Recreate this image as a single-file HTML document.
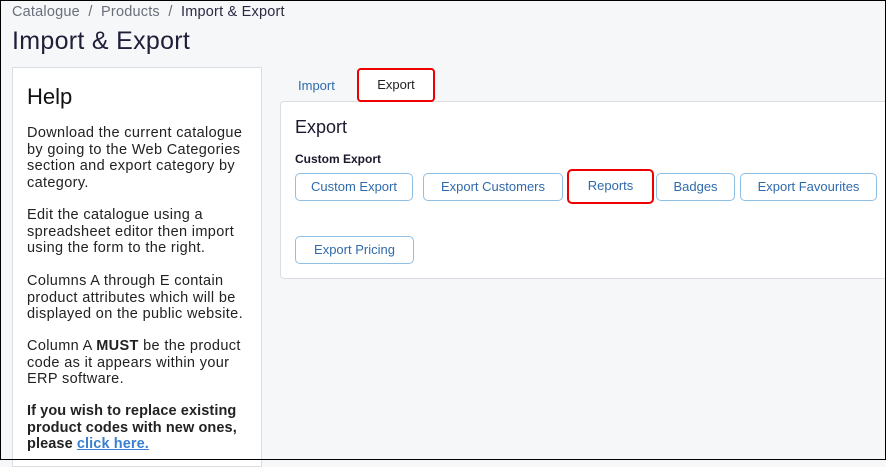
<!DOCTYPE html><html><head><style>
*{box-sizing:border-box;margin:0;padding:0}
body{width:886px;height:460px;overflow:hidden;background:#f6f7f9;font-family:"Liberation Sans",sans-serif;position:relative;color:#1f1f3a}
.frame{position:absolute;left:0;top:0;width:886px;height:460px;border:1px solid #000;z-index:10;pointer-events:none}
.a{position:absolute;white-space:nowrap}
.bc{left:12px;top:4px;font-size:14.5px;color:#6b6f7b;letter-spacing:0.2px}
.bc b{font-weight:normal;color:#2a2a44}
h1{position:absolute;left:12px;top:27px;font-size:25px;font-weight:normal;color:#1f1f3a;letter-spacing:0.3px}
.help{position:absolute;left:12px;top:67px;width:250px;height:400px;background:#fff;border:1px solid #dcdde2}
.help h2{position:absolute;left:14px;top:16px;font-size:22px;font-weight:normal;color:#111}
.help p{position:absolute;left:14px;width:222px;font-size:14.5px;line-height:16.5px;color:#222;letter-spacing:0.35px}
.panel{position:absolute;left:280px;top:101px;width:620px;height:178px;background:#fff;border:1px solid #dcdde2;border-radius:4px}
.btn{position:absolute;height:28px;border:1px solid #8ec0e6;border-radius:5px;background:#fff;color:#2f6aaa;font-size:13px;text-align:center;line-height:26px}
</style></head><body>
<div class="frame"></div>
<div class="a bc">Catalogue&nbsp; / &nbsp;Products&nbsp; / &nbsp;<b>Import &amp; Export</b></div>
<h1>Import &amp; Export</h1>
<div class="help"><h2>Help</h2>
<p style="top:57px">Download the current catalogue by going to the Web Categories section and export category by category.</p>
<p style="top:139px">Edit the catalogue using a spreadsheet editor then import using the form to the right.</p>
<p style="top:205px">Columns A through E contain product attributes which will be displayed on the public website.</p>
<p style="top:270px">Column A <b>MUST</b> be the product code as it appears within your ERP software.</p>
<p style="top:335px;font-weight:bold;letter-spacing:0.1px">If you wish to replace existing product codes with new ones, please <span style="color:#3a7fd0;text-decoration:underline">click here.</span></p>
</div>
<div class="panel"></div>
<div class="a" style="left:298px;top:78px;font-size:13px;color:#2f6aaa">Import</div>
<div class="a" style="left:357px;top:68px;width:78px;height:34px;border:2.5px solid #e00;border-radius:4px;background:#fff;font-size:13px;text-align:center;line-height:29px;color:#222">Export</div>
<div class="a" style="left:295px;top:117px;font-size:18px;color:#1a1a2e">Export</div>
<div class="a" style="left:295px;top:152px;font-size:12px;font-weight:bold;color:#1a1a2e">Custom Export</div>
<div class="btn" style="left:295px;top:173px;width:118px">Custom Export</div>
<div class="btn" style="left:423px;top:173px;width:140px">Export Customers</div>
<div class="btn" style="left:567px;top:169px;width:87px;height:35px;border:2.5px solid #e00;line-height:30px">Reports</div>
<div class="btn" style="left:656px;top:173px;width:79px">Badges</div>
<div class="btn" style="left:740px;top:173px;width:137px">Export Favourites</div>
<div class="btn" style="left:295px;top:236px;width:119px">Export Pricing</div>
</body></html>
